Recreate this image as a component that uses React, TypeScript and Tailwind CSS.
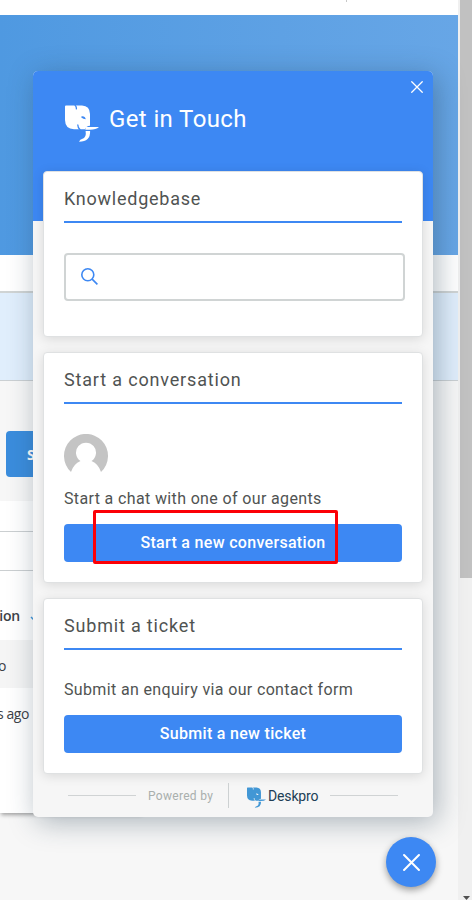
import React from "react";

function Elephant({ className, eye }: { className: string; eye: string }) {
  return (
    <svg viewBox="0 0 34 37" className={className}>
      <path fill="currentColor" d="M0 1.500Q0 .6 1 .6H17Q24.800 1 25 9V20.700Q21.200 21 20 24.300H9Q.2 24 0 15Z" />
      <g fill="none" stroke={eye} strokeWidth="1.300">
        <path d="M9.800 0Q11.800 1.800 11.300 4.300" />
        <path d="M12.700 19.500Q12.700 22.500 15.300 25" />
      </g>
      <path fill={eye} d="M16.300 11.400Q20 10.700 20.800 14.200Q18.200 14.200 16.300 12.600Z" />
      <path fill="currentColor" d="M20.800 22H34Q31 24.700 25 24.700H20.300Z" />
      <path fill="currentColor" d="M20.600 26H25.100Q25.600 36.500 14 36.800Q15.200 34.400 17 34.100Q21.800 32.700 20.600 26Z" />
    </svg>
  );
}

function Cross({ className, width }: { className: string; width: number }) {
  return (
    <svg viewBox="0 0 16 16" className={className} fill="none" stroke="currentColor" strokeWidth={width} strokeLinecap="round">
      <path d="M1 1 15 15M15 1 1 15" />
    </svg>
  );
}

function Card({ title, className, titleClass, children }: { title: string; className: string; titleClass: string; children: React.ReactNode }) {
  return (
    <section className={`mx-[10px] rounded border border-[#dfe1e2] bg-white pl-5 pr-5 shadow-[0_2px_12px_rgba(0,0,0,0.12)] ${className}`}>
      <h2 className="flex h-[51px] items-center border-b-2 border-[#3d88f3] pt-[3px] text-[18px] text-[#505352]">
        <span className={`whitespace-nowrap ${titleClass}`}>{title}</span>
      </h2>
      {children}
    </section>
  );
}

function Backdrop() {
  return (
    <div className="flex h-[900px] w-[472px]">
      <main className="flex w-[458px] flex-col overflow-hidden bg-[#f7f7f7]">
        <div className="h-[15px] shrink-0 bg-white pl-[346px]">
          <div className="h-[2px] w-px bg-[#c8c8c8]" />
        </div>
        <div className="h-[240px] shrink-0 bg-gradient-to-r from-[#4f99e1] to-[#67a6e6]" />
        <div className="h-[38px] shrink-0 border-b-2 border-[#d0d4d4] bg-white" />
        <div className="h-[88px] shrink-0 border-b border-[#cbd0d3] bg-[#e0eefc]" />
        <div className="h-[120px] shrink-0 pl-[6px] pt-[50px]">
          <div className="flex h-[46px] w-[100px] items-center rounded bg-[#3b8ddd] pl-[21px] font-['Open_Sans',sans-serif] text-[14px] font-bold text-white">
            Submit
          </div>
        </div>
        <div className="h-[312px] w-[143px] shrink-0 bg-white font-['Open_Sans',sans-serif] text-[14px] text-[#3c4146] shadow-[0_3px_4px_-1px_rgba(0,0,0,0.35)]">
          <div className="h-[30px]" />
          <div className="h-[40px] border-y border-[#cbcfd1]" />
          <div className="flex h-[69px] items-center pt-[20px]">
            <span className="flex w-5 justify-end font-semibold tracking-[-0.2px]">ion</span>
            <svg viewBox="0 0 12 8" className="ml-[10px] mt-[9px] h-2 w-3" fill="none" stroke="#4398dc" strokeWidth="1.5">
              <path d="m1 1 5 5 5-5" />
            </svg>
          </div>
          <div className="flex h-[48px] items-center bg-[#f5f5f5] pt-[2px]">
            <span className="-ml-[2px] tracking-[-0.3px]">o</span>
          </div>
          <div className="flex h-[50px] items-center">
            <span className="-ml-[3px] whitespace-nowrap tracking-[-0.45px]">s ago</span>
          </div>
        </div>
      </main>
      <div className="flex w-[14px] flex-col justify-between bg-[#f0f0f0] pl-[2px]">
        <div className="h-[578px] bg-[#c1c1c1]" />
        <svg viewBox="0 0 12 4" className="h-1 w-3">
          <path fill="#505050" d="M3 0H10L6.5 4Z" />
        </svg>
      </div>
    </div>
  );
}

export default function App() {
  return (
    <div className="relative h-[900px] w-[472px] overflow-hidden font-[Roboto,sans-serif]">
      <Backdrop />

      <div className="absolute left-[33px] top-[71px] h-[746px] w-[400px] rounded-[5px] bg-[#f6f6f6] shadow-[4px_5px_28px_rgba(32,58,78,0.36)]">
        <header className="h-[150px] rounded-t-[5px] bg-[#3d88f3] text-white">
          <div className="flex h-8 justify-end pr-[10px] pt-[10px]">
            <Cross className="h-3 w-3" width={1.7} />
          </div>
          <div className="flex items-start pl-[32px]">
            <Elephant className="mt-[2px] h-[37px] w-[34px]" eye="#3d88f3" />
            <h1 className="ml-[10px] whitespace-nowrap text-[24px] leading-8 tracking-[0.38px]">Get in Touch</h1>
          </div>
        </header>

        <Card title="Knowledgebase" className="-mt-[50px] h-[166px]" titleClass="tracking-[0.75px]">
          <div className="mt-[30px] flex h-12 w-[341px] items-center rounded border-2 border-[#d0d4d4] pb-[1px] pl-[15px]">
            <svg viewBox="0 0 17 17" className="h-[17px] w-[17px]" fill="none" stroke="#3d88f3" strokeWidth="1.6">
              <circle cx="6.8" cy="6.8" r="6" />
              <path d="m11.1 11.1 5.3 5.3" />
            </svg>
          </div>
        </Card>

        <Card title="Start a conversation" className="mt-[15px] h-[231px]" titleClass="tracking-[0.83px]">
          <svg viewBox="0 0 44 44" className="mt-[30px] h-11 w-11">
            <path fill="#c4c4c4" d="M7 38A22 22 0 1 1 37 38Q34.5 30 27.5 27A10 10 0 1 0 16.5 27Q9.5 30 7 38Z" />
          </svg>
          <p className="mt-[9px] whitespace-nowrap text-[16px] leading-6 tracking-[0.36px] text-[#505352]">Start a chat with one of our agents</p>
          <button className="mt-[13px] flex h-[38px] w-full items-center justify-center rounded bg-[#3d88f3] text-[16px] font-medium tracking-[0.31px] text-white">
            Start a new conversation
          </button>
        </Card>

        <Card title="Submit a ticket" className="mt-[15px] h-[176px]" titleClass="tracking-[0.82px]">
          <p className="mt-[28px] whitespace-nowrap text-[16px] leading-6 tracking-[0.35px] text-[#505352]">Submit an enquiry via our contact form</p>
          <button className="mt-[13px] flex h-[38px] w-full items-center justify-center rounded bg-[#3d88f3] text-[16px] font-medium tracking-[0.3px] text-white">
            Submit a new ticket
          </button>
        </Card>

        <footer className="flex h-[43px] items-center pl-[35px]">
          <div className="h-px w-[68px] bg-[#d0d3d4]" />
          <span className="ml-3 w-[65px] whitespace-nowrap text-[12px] tracking-[0.3px] text-[#a9afad]">Powered by</span>
          <div className="ml-[15px] h-[25px] w-px bg-[#cdd1d2]" />
          <Elephant className="ml-[18px] mt-[4px] h-[21px] w-[19px] text-[#4297d5]" eye="#f6f6f6" />
          <span className="ml-[2px] mt-[2px] w-[50px] whitespace-nowrap text-[14px] tracking-[-0.15px] text-[#203d55]">Deskpro</span>
          <div className="ml-3 h-px w-[68px] bg-[#d0d3d4]" />
        </footer>
      </div>

      <div className="absolute left-[93px] top-[510px] h-[54px] w-[245px] rounded-[2px] border-[3px] border-[#fc0006]" />
      <button className="absolute left-[386px] top-[837px] flex h-[50px] w-[50px] items-center justify-center rounded-full bg-[#3d88f3] text-white shadow-[0_3px_7px_rgba(0,0,0,0.38)]">
        <Cross className="h-[17px] w-[17px]" width={1.9} />
      </button>
    </div>
  );
}
